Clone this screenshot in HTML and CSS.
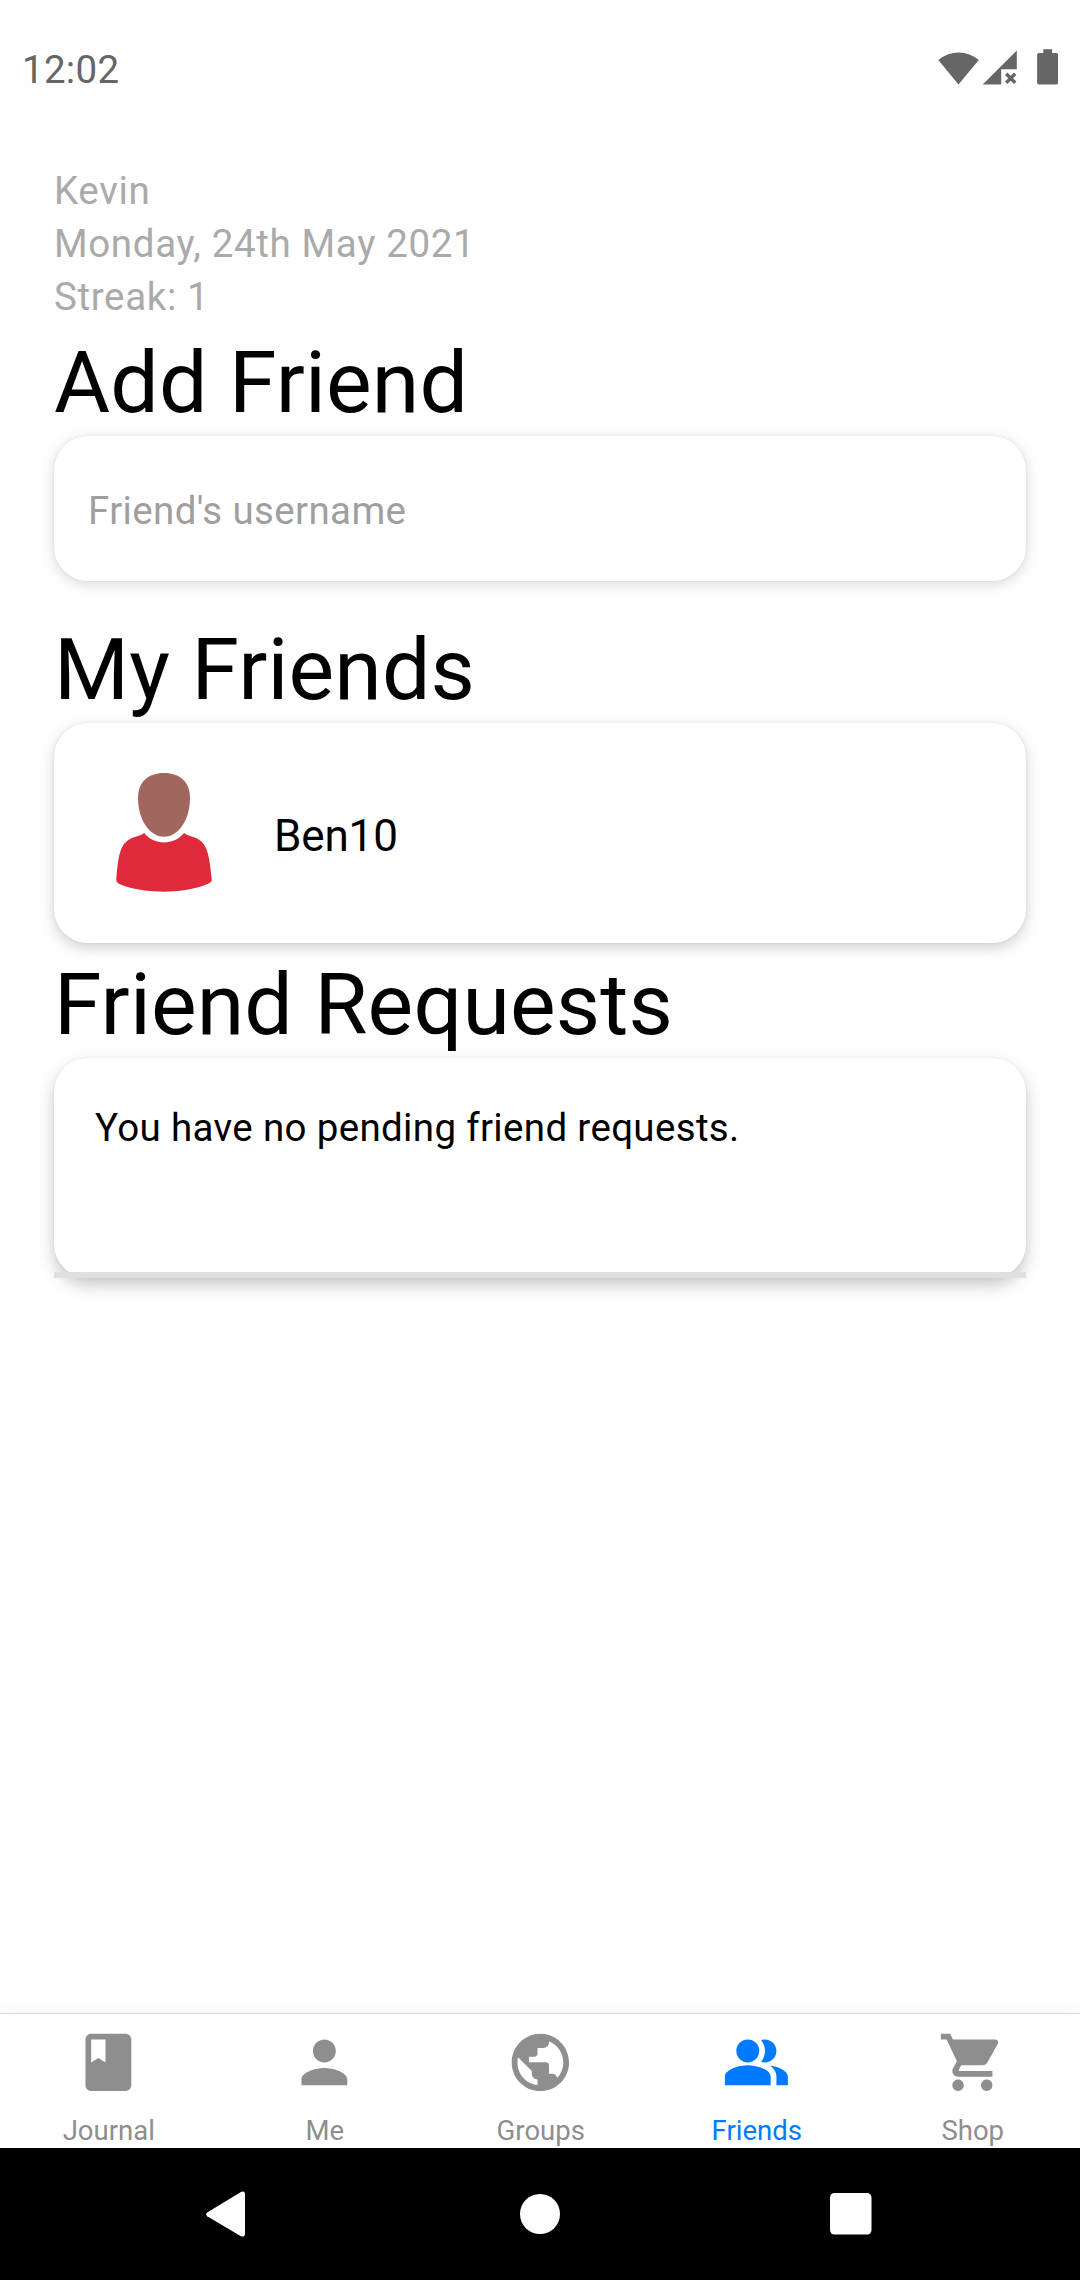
FILE: index.html
```html
<!DOCTYPE html>
<html lang="en">
<head>
<meta charset="utf-8">
<title>Friends</title>
<link rel="stylesheet" href="styles.css">
</head>
<body>
<div class="screen">
  <header class="status-bar">
    <span class="clock">12:02</span>
    <svg class="status-icons" width="120" height="36" viewBox="0 0 120 36" fill="#666">
      <path d="M0.300 11 A31 31 0 0 1 40.800 11 L20.500 35.400 Z"/>
      <path d="M44.700 35.500 L78.800 1.500 V20.200 H63.200 V35.500 Z"/>
      <path d="M68.200 24.700 l9 9 M77.200 24.700 l-9 9" stroke="#666" stroke-width="3.400"/>
      <path d="M105.300 0.300 h8.800 v3.700 h4 a2 2 0 0 1 2 2 v27.500 a2 2 0 0 1 -2 2 h-17 a2 2 0 0 1 -2 -2 v-27.500 a2 2 0 0 1 2 -2 h4.200 z"/>
    </svg>
  </header>

  <main class="content">
    <div class="profile">
      <div>Kevin</div>
      <div>Monday, 24th May 2021</div>
      <div>Streak: 1</div>
    </div>

    <h1 class="heading">Add Friend</h1>
    <input class="card username" type="text" placeholder="Friend's username">

    <h1 class="heading">My Friends</h1>
    <div class="card friend">
      <svg class="avatar" width="96" height="120" viewBox="0 0 96 120">
        <path fill="#a1675f" d="M48 0 C64 0 74 9 74 25 C74 46 63 63.700 48 63.700 C33 63.700 22 46 22 25 C22 9 32 0 48 0 Z"/>
        <path fill="#de2a3a" d="M28.300 60 C33 66 40 69.500 48 69.500 C56 69.500 63 66 68 60 C72 63 78 63.800 82 66 C92 71.500 93.500 85 95.700 106 C96 109 94 110 91 111.300 C77 117 62 118.700 48 118.700 C34 118.700 17 117 4 111.300 C1.500 110 0 109 0.300 106 C2.200 85 3.500 71.500 14 66 C18 63.800 24 63 28.300 60 Z"/>
      </svg>
      <span class="friend-name">Ben10</span>
    </div>

    <h1 class="heading">Friend Requests</h1>
    <div class="card requests">
      <p class="empty">You have no pending friend requests.</p>
      <div class="divider"></div>
    </div>
  </main>

  <nav class="tabs">
    <a class="tab">
      <svg viewBox="0 0 24 24"><path d="M18 2H6c-1.100 0-2 .9-2 2v16c0 1.100.9 2 2 2h12c1.100 0 2-.9 2-2V4c0-1.100-.9-2-2-2zM6 4h5v8l-2.500-1.500L6 12V4z"/></svg>
      <span>Journal</span>
    </a>
    <a class="tab">
      <svg viewBox="0 0 24 24"><path d="M12 12c2.210 0 4-1.790 4-4s-1.790-4-4-4-4 1.790-4 4 1.790 4 4 4zm0 2c-2.670 0-8 1.340-8 4v2h16v-2c0-2.660-5.330-4-8-4z"/></svg>
      <span>Me</span>
    </a>
    <a class="tab">
      <svg viewBox="0 0 24 24"><path d="M12 2C6.480 2 2 6.480 2 12s4.480 10 10 10 10-4.480 10-10S17.520 2 12 2zm-1 17.930c-3.950-.49-7-3.850-7-7.930 0-.62.08-1.210.21-1.790L9 15v1c0 1.100.9 2 2 2v1.930zm6.900-2.540c-.26-.81-1-1.390-1.900-1.390h-1v-3c0-.55-.45-1-1-1H8v-2h2c.55 0 1-.45 1-1V7h2c1.100 0 2-.9 2-2v-.41c2.930 1.190 5 4.060 5 7.410 0 2.080-.8 3.970-2.100 5.390z"/></svg>
      <span>Groups</span>
    </a>
    <a class="tab active">
      <svg viewBox="0 0 24 24"><path d="M16.670 13.130C18.040 14.060 19 15.320 19 17v3h4v-3c0-2.180-3.570-3.470-6.330-3.870z"/><circle cx="9" cy="8" r="4"/><path d="M15 12c2.210 0 4-1.790 4-4s-1.790-4-4-4c-.47 0-.91.1-1.330.24C14.500 5.270 15 6.580 15 8s-.5 2.730-1.330 3.760c.42.14.86.24 1.330.24zM9 13c-2.670 0-8 1.340-8 4v3h16v-3c0-2.660-5.330-4-8-4z"/></svg>
      <span>Friends</span>
    </a>
    <a class="tab">
      <svg viewBox="0 0 24 24"><path d="M7 18c-1.100 0-1.990.9-1.990 2S5.900 22 7 22s2-.9 2-2-.9-2-2-2zM1 2v2h2l3.600 7.590-1.350 2.450c-.16.28-.25.61-.25.96 0 1.100.9 2 2 2h12v-2H7.420c-.14 0-.25-.11-.25-.25l.03-.12.9-1.630h7.450c.75 0 1.410-.41 1.750-1.030l3.580-6.490c.08-.14.12-.31.12-.48 0-.55-.45-1-1-1H5.210l-.94-2H1zm16 16c-1.100 0-1.990.9-1.990 2s.89 2 1.990 2 2-.9 2-2-.9-2-2-2z"/></svg>
      <span>Shop</span>
    </a>
  </nav>

  <footer class="system-nav">
    <svg width="40" height="46" viewBox="0 0 40 46"><path fill="#fff" d="M1.200 21.400 L34.500 1.200 Q39 -.8 39 3.500 V42.500 Q39 47 34.500 45 L1.200 25.200 Q-.8 23.300 1.200 21.400 Z"/></svg>
    <svg width="40" height="40" viewBox="0 0 40 40"><circle cx="20" cy="20" r="20" fill="#fff"/></svg>
    <svg width="42" height="42" viewBox="0 0 42 42"><rect width="41.500" height="41.500" rx="4.500" fill="#fff"/></svg>
  </footer>
</div>
</body>
</html>
```
FILE: styles.css
```css
* {
  box-sizing: border-box;
}

body {
  margin: 0;
  background: #fefefe;
  color: #000;
  font-family: Roboto, sans-serif;
  font-size: 38.5px;
}

.screen {
  display: flex;
  flex-direction: column;
  width: 1080px;
  height: 2280px;
  overflow: hidden;
}

.status-bar {
  display: flex;
  justify-content: space-between;
  align-items: flex-start;
  height: 164px;
  padding: 49px 22px 0 22px;
  color: #666;
}

.clock {
  line-height: 41px;
  letter-spacing: 0.3px;
}

.content {
  flex: 1;
  padding: 0 54px;
}

.profile {
  margin-bottom: 9px;
  color: #aaa;
  line-height: 53px;
  letter-spacing: 0.65px;
}

.heading {
  margin: 0 0 3px;
  font-size: 86px;
  font-weight: 400;
  line-height: 101px;
  letter-spacing: 0.15px;
}

.card {
  display: block;
  width: 972px;
  border: 0;
  border-radius: 34px;
  background: #fff;
  box-shadow: 0 5px 14px rgba(0, 0, 0, 0.18), 0 0 3px rgba(0, 0, 0, 0.07);
}

.username {
  height: 145px;
  margin-bottom: 38px;
  padding: 4px 34px 0;
  color: #000;
  font: inherit;
  letter-spacing: 0.36px;
  box-shadow: 0 3px 13px rgba(0, 0, 0, 0.15), 0 0 3px rgba(0, 0, 0, 0.07);
}

.username::placeholder {
  color: #9f9f9f;
  opacity: 1;
}

.friend {
  display: flex;
  align-items: flex-start;
  height: 220px;
  margin-bottom: 11px;
  padding: 50px 62px 0;
}

.friend-name {
  margin: 37px 0 0 62px;
  font-size: 44px;
  line-height: 52px;
  letter-spacing: -0.15px;
}

.requests {
  display: flex;
  flex-direction: column;
  justify-content: space-between;
  height: 220px;
  box-shadow: 0 7px 16px rgba(0, 0, 0, 0.22), 0 0 3px rgba(0, 0, 0, 0.05);
}

.empty {
  margin: 0;
  padding: 47px 41px 0;
  line-height: 45px;
  letter-spacing: 0.34px;
}

.divider {
  height: 6px;
  background: #dfdfdf;
}

.tabs {
  display: grid;
  grid-template-columns: repeat(5, 1fr);
  height: 135px;
  border-top: 1px solid #d8d8d8;
  background: #fff;
  box-shadow: 0 0 12px rgba(0, 0, 0, 0.06);
}

.tab {
  display: flex;
  flex-direction: column;
  align-items: center;
  padding-top: 13.6px;
  color: #8e8e8e;
  font-size: 27.5px;
  line-height: 32px;
}

.tab svg {
  width: 68.75px;
  height: 68.75px;
  margin: 0 0 19px 1px;
  fill: currentColor;
}

.tab span {
  padding-left: 1.5px;
}

.active {
  color: #007aff;
}

.system-nav {
  display: grid;
  grid-template-columns: 314px 310px 42px;
  align-items: center;
  height: 132px;
  padding: 0 208px 0 206px;
  background: #000;
}
```
